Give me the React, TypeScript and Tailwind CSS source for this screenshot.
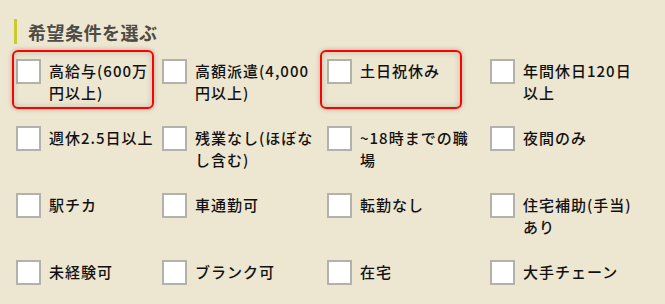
const items: string[][] = [
  ["高給与(600万", "円以上)"],
  ["高額派遣(4,000", "円以上)"],
  ["土日祝休み"],
  ["年間休日120日", "以上"],
  ["週休2.5日以上"],
  ["残業なし(ほぼな", "し含む)"],
  ["~18時までの職", "場"],
  ["夜間のみ"],
  ["駅チカ"],
  ["車通勤可"],
  ["転勤なし"],
  ["住宅補助(手当)", "あり"],
  ["未経験可"],
  ["ブランク可"],
  ["在宅"],
  ["大手チェーン"],
];

export default function App() {
  return (
    <div
      className="relative w-[665px] h-[304px] overflow-hidden bg-[#ede6d1]"
      style={{ fontFamily: "'Noto Sans CJK JP', 'Noto Sans', sans-serif" }}
    >
      {/* Heading */}
      <div className="flex items-center h-[25px] mt-[19px] ml-[14px] border-l-[3px] border-[#c9cc2c] pl-[11px]">
        <h2 className="text-[18px] leading-none font-bold tracking-[0.5px] text-[#4d4b45]">
          希望条件を選ぶ
        </h2>
      </div>

      {/* Options */}
      <div className="grid grid-cols-[146px_165px_163px_1fr] auto-rows-[67px] mt-[15px] ml-[16px]">
        {items.map((lines, i) => (
          <label key={i} className="flex items-start gap-2 cursor-pointer">
            <span className="shrink-0 w-[25px] h-[25px] bg-white border-2 border-[#b3b1ac]" />
            <span className="mt-px text-[15px] leading-[22px] tracking-[1px] font-medium text-[#111]">
              {lines.map((l, j) => (
                <span key={j} className="block whitespace-nowrap">
                  {l}
                </span>
              ))}
            </span>
          </label>
        ))}
      </div>

      {/* Highlight marks */}
      <div className="absolute left-[12px] top-[50px] w-[142px] h-[59px] rounded-[6px] border-2 border-[#f00] shadow-[0_0_5px_rgba(0,0,0,0.25),inset_0_0_6px_rgba(0,0,0,0.18)]" />
      <div className="absolute left-[320px] top-[50px] w-[142px] h-[59px] rounded-[6px] border-2 border-[#f00] shadow-[0_0_5px_rgba(0,0,0,0.25),inset_0_0_6px_rgba(0,0,0,0.18)]" />
    </div>
  );
}
